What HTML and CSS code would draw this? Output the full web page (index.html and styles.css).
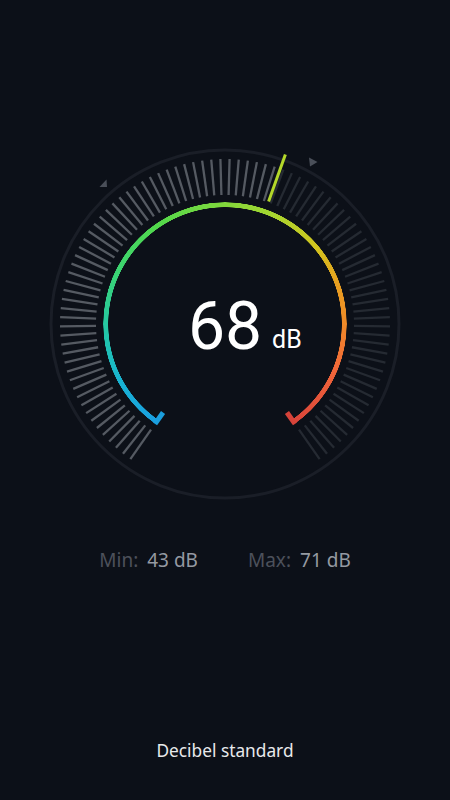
FILE: index.html
```html
<!DOCTYPE html>
<html lang="en">
<head>
<meta charset="utf-8">
<title>Sound meter</title>
<link rel="stylesheet" href="styles.css">
</head>
<body>
<main class="screen">
  <section class="gauge">
    <svg class="dial" viewBox="0 0 400 400" width="400" height="400">
      <circle class="ring" cx="200" cy="200" r="174"/>
      <g id="ticks"></g>
      <line class="hook hook-start" x1="200" y1="322" x2="200" y2="308" transform="rotate(35 200 200)"/>
      <line class="hook hook-end" x1="200" y1="322" x2="200" y2="308" transform="rotate(-35 200 200)"/>
      <line class="needle" x1="200" y1="70" x2="200" y2="20" transform="rotate(19.6 200 200)"/>
      <polygon class="marker" points="81.5,55.5 82,63 74.5,63"/>
      <polygon class="marker" points="284,33.5 292.5,38 285,42.5"/>
    </svg>
    <div class="arc"></div>
    <div class="readout">
      <div class="value">68<span class="unit">dB</span></div>
    </div>
  </section>
  <section class="stats">
    <div class="stat"><span class="label">Min:</span><span class="num">43 dB</span></div>
    <div class="stat"><span class="label">Max:</span><span class="num">71 dB</span></div>
  </section>
  <footer class="standard">Decibel standard</footer>
</main>
<script src="script.js"></script>
</body>
</html>
```
FILE: styles.css
```css
html, body {
  margin: 0;
  padding: 0;
  background: #0c1018;
}
body {
  font-family: Roboto, "Noto Sans", "Liberation Sans", sans-serif;
  color: #ffffff;
}
.screen {
  width: 450px;
  height: 800px;
  display: flex;
  flex-direction: column;
  align-items: center;
}
.gauge {
  position: relative;
  width: 400px;
  height: 400px;
  margin-top: 124px;
  flex: none;
}
.dial {
  display: block;
}
.ring {
  fill: none;
  stroke: #1a1e27;
  stroke-width: 3;
}
.tick {
  stroke: #252a32;
  stroke-width: 2.3;
}
.tick.lit {
  stroke: #555a62;
}
.needle {
  stroke: #b4d82a;
  stroke-width: 3;
}
.hook {
  stroke-width: 5;
}
.hook-start { stroke: #1b9edd; }
.hook-end { stroke: #d6433a; }
.marker {
  fill: #4a4f59;
}
.arc {
  position: absolute;
  left: 78px;
  top: 78px;
  width: 244px;
  height: 244px;
  border-radius: 50%;
  background: conic-gradient(from 215deg,
    #1a9ee0 0deg,
    #18b2d4 25deg,
    #22c6aa 50deg,
    #3ad474 80deg,
    #52d84c 110deg,
    #7ad83e 140deg,
    #a6d630 168deg,
    #d2c41e 195deg,
    #e8a020 215deg,
    #f08a28 235deg,
    #f2663a 258deg,
    #d8443a 290deg,
    transparent 290deg);
  -webkit-mask: radial-gradient(closest-side, transparent calc(100% - 5.5px), #000 calc(100% - 5px), #000 calc(100% - 0.5px), transparent 100%);
  mask: radial-gradient(closest-side, transparent calc(100% - 5.5px), #000 calc(100% - 5px), #000 calc(100% - 0.5px), transparent 100%);
}
.readout {
  position: absolute;
  inset: 0;
  display: flex;
  align-items: center;
  justify-content: center;
  padding-top: 6px;
  box-sizing: border-box;
}
.value {
  position: relative;
  font-size: 66px;
  line-height: 66px;
  font-weight: 400;
  color: #ffffff;
}
.unit {
  position: absolute;
  left: 100%;
  bottom: 8.5px;
  margin-left: 10px;
  font-size: 25px;
  line-height: 25px;
}
.stats {
  display: flex;
  justify-content: center;
  gap: 50px;
  margin-top: 24px;
  font-family: "Noto Sans", Roboto, sans-serif;
  font-size: 19px;
  line-height: 24px;
}
.stat {
  display: flex;
  gap: 9px;
}
.label {
  color: #4c515b;
}
.num {
  color: #959aa2;
}
.standard {
  margin-top: 167px;
  font-family: "Noto Sans", Roboto, sans-serif;
  font-size: 17.3px;
  line-height: 24px;
  color: #e8e9eb;
}
```
FILE: script.js
```js
(function () {
  var ns = 'http://www.w3.org/2000/svg';
  var g = document.getElementById('ticks');
  var intervals = 91;
  var value = 68;
  var valAngle = -145 + value / 120 * 290 + 0.3;
  for (var k = 0; k <= intervals; k++) {
    var a = -145 + k * 290 / intervals;
    var l = document.createElementNS(ns, 'line');
    l.setAttribute('x1', '200');
    l.setAttribute('y1', '71');
    l.setAttribute('x2', '200');
    l.setAttribute('y2', '35');
    l.setAttribute('transform', 'rotate(' + a.toFixed(3) + ' 200 200)');
    l.setAttribute('class', a <= valAngle ? 'tick lit' : 'tick');
    g.appendChild(l);
  }
})();
```
